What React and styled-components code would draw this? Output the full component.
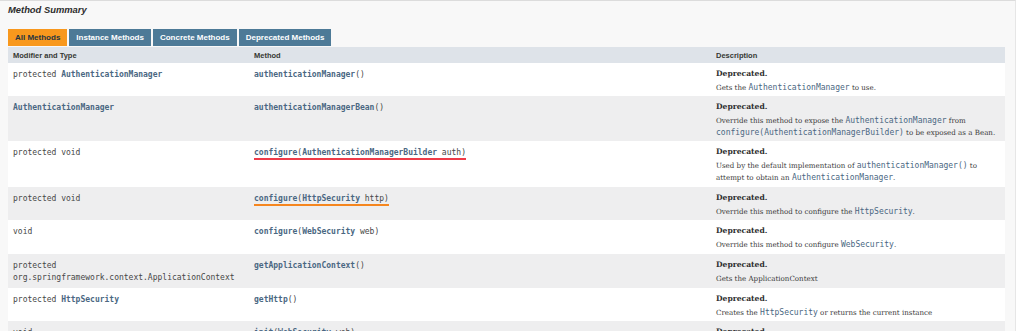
import React from "react";
import styled, { createGlobalStyle } from "styled-components";

const GlobalStyle = createGlobalStyle`
  body {
    margin: 0;
    background: #ffffff;
  }
`;

// 바깥 회색 영역
const Page = styled.div`
  width: 1016px;
  height: 331px;
  overflow: hidden;
  background: #f8f8f8;
  border-top: 1px solid #dcdcdc;
  border-right: 1px solid #e6e6e6;
  padding: 0 11px 0 8px;
  box-sizing: border-box;
`;

const Title = styled.h3`
  margin: 0;
  padding-top: 3px;
  height: 25px;
  box-sizing: border-box;
  font-family: "Liberation Sans", Arial, sans-serif;
  font-size: 9.4px;
  font-weight: bold;
  font-style: italic;
  color: #2c2c2c;
`;

const Tabs = styled.div`
  display: flex;
  gap: 2px;
  height: 17px;
  margin-top: 3px;
`;

const Tab = styled.span`
  display: flex;
  align-items: center;
  padding: 0 7px;
  background: ${(p) => (p.active ? "#f8981d" : "#4d7a97")};
  color: ${(p) => (p.active ? "#253441" : "#ffffff")};
  font-family: "Liberation Sans", Arial, sans-serif;
  font-size: 8px;
  font-weight: bold;
`;

const Table = styled.table`
  width: 997px;
  margin-top: 1px;
  border-collapse: collapse;
  table-layout: fixed;
`;

const Head = styled.th`
  height: 16px;
  padding: 0 5px;
  background: #dee3e9;
  text-align: left;
  font-family: "Liberation Sans", Arial, sans-serif;
  font-size: 7.5px;
  font-weight: bold;
  color: #353833;
`;

const Row = styled.tr`
  height: ${(p) => p.h}px;
  background: ${(p) => (p.alt ? "#eeeeef" : "#ffffff")};
`;

const Cell = styled.td`
  vertical-align: top;
  padding: 6px 5px 0;
  font-family: "DejaVu Sans Mono", monospace;
  font-size: 8px;
  line-height: 11.5px;
  color: #474747;
`;

const DescCell = styled(Cell)`
  padding-top: 5px;
  font-family: "DejaVu Serif", Georgia, serif;
  font-size: 7.1px;
  color: #3a3a3a;
`;

const Code = styled.code`
  font-family: "DejaVu Sans Mono", monospace;
  font-size: 8px;
  color: ${(p) => (p.plain ? "#474747" : "#4a6782")};
  font-weight: ${(p) => (p.bold ? "bold" : "normal")};
`;

const Dep = styled.div`
  font-weight: bold;
  font-size: 7.6px;
  line-height: 12px;
  margin-bottom: 2px;
  color: #2f2f2f;
`;

// 스크린샷에 그어진 밑줄 표시
const Marked = styled.span`
  border-bottom: 2px solid ${(p) => p.color};
  padding-bottom: 1px;
`;

const tabs = ["All Methods", "Instance Methods", "Concrete Methods", "Deprecated Methods"];

const L = ({ children, bold = true }) => <Code bold={bold}>{children}</Code>;

const rows = [
  {
    h: 33,
    type: <>protected <L>AuthenticationManager</L></>,
    method: <><L>authenticationManager</L>()</>,
    desc: <>Gets the <L bold={false}>AuthenticationManager</L> to use.</>,
  },
  {
    h: 45,
    type: <L>AuthenticationManager</L>,
    method: <><L>authenticationManagerBean</L>()</>,
    desc: (
      <>
        Override this method to expose the <L bold={false}>AuthenticationManager</L> from{" "}
        <L bold={false}>configure(AuthenticationManagerBuilder)</L> to be exposed as a Bean.
      </>
    ),
  },
  {
    h: 46,
    type: "protected void",
    method: (
      <Marked color="#ee3b48">
        <L>configure</L>(<L>AuthenticationManagerBuilder</L> auth)
      </Marked>
    ),
    desc: (
      <>
        Used by the default implementation of <L bold={false}>authenticationManager()</L> to
        attempt to obtain an <L bold={false}>AuthenticationManager</L>.
      </>
    ),
  },
  {
    h: 33,
    type: "protected void",
    method: (
      <Marked color="#f5861f">
        <L>configure</L>(<L>HttpSecurity</L> http)
      </Marked>
    ),
    desc: <>Override this method to configure the <L bold={false}>HttpSecurity</L>.</>,
  },
  {
    h: 34,
    type: "void",
    method: <><L>configure</L>(<L>WebSecurity</L> web)</>,
    desc: <>Override this method to configure <L bold={false}>WebSecurity</L>.</>,
  },
  {
    h: 34,
    type: <>protected<br />org.springframework.context.ApplicationContext</>,
    method: <><L>getApplicationContext</L>()</>,
    desc: "Gets the ApplicationContext",
  },
  {
    h: 33,
    type: <>protected <L>HttpSecurity</L></>,
    method: <><L>getHttp</L>()</>,
    desc: <>Creates the <L bold={false}>HttpSecurity</L> or returns the current instance</>,
  },
  {
    h: 33,
    type: "void",
    method: <><L>init</L>(<L>WebSecurity</L> web)</>,
    desc: "",
  },
];

const App = () => (
  <>
    <GlobalStyle />
    <Page>
      <Title>Method Summary</Title>
      <Tabs>
        {tabs.map((t, i) => (
          <Tab key={t} active={i === 0}>
            {t}
          </Tab>
        ))}
      </Tabs>
      <Table>
        <colgroup>
          <col style={{ width: 241 }} />
          <col style={{ width: 462 }} />
          <col />
        </colgroup>
        <thead>
          <tr>
            <Head>Modifier and Type</Head>
            <Head>Method</Head>
            <Head>Description</Head>
          </tr>
        </thead>
        <tbody>
          {rows.map((r, i) => (
            <Row key={i} h={r.h} alt={i % 2 === 1}>
              <Cell>{r.type}</Cell>
              <Cell>{r.method}</Cell>
              <DescCell>
                <Dep>Deprecated.</Dep>
                {r.desc}
              </DescCell>
            </Row>
          ))}
        </tbody>
      </Table>
    </Page>
  </>
);

export default App;
